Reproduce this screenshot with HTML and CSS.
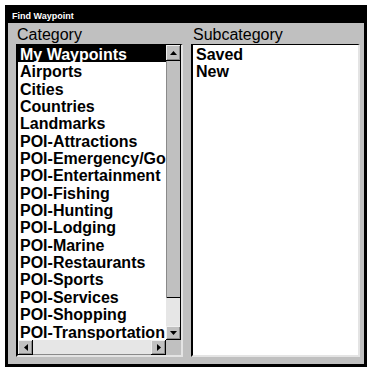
FILE: index.html
```html
<!DOCTYPE html>
<html lang="en">
<head>
    <meta charset="UTF-8">
    <title>Find Waypoint</title>
    <link rel="stylesheet" href="styles.css">
</head>
<body>
    <div class="window">
        <div class="titlebar">Find Waypoint</div>
        <div class="panes">
            <div class="column left-col">
                <div class="label">Category</div>
                <div class="listbox">
                    <ul class="items">
                        <li class="selected">My Waypoints</li>
                        <li>Airports</li>
                        <li>Cities</li>
                        <li>Countries</li>
                        <li>Landmarks</li>
                        <li>POI-Attractions</li>
                        <li>POI-Emergency/Go</li>
                        <li>POI-Entertainment</li>
                        <li>POI-Fishing</li>
                        <li>POI-Hunting</li>
                        <li>POI-Lodging</li>
                        <li>POI-Marine</li>
                        <li>POI-Restaurants</li>
                        <li>POI-Sports</li>
                        <li>POI-Services</li>
                        <li>POI-Shopping</li>
                        <li>POI-Transportation</li>
                    </ul>
                    <div class="vscroll">
                        <div class="sb-btn up">
                            <svg width="7" height="4" viewBox="0 0 7 4"><polygon points="3.5,0 7,4 0,4" fill="#000"/></svg>
                        </div>
                        <div class="thumb"></div>
                        <div class="track"></div>
                        <div class="sb-btn down">
                            <svg width="7" height="4" viewBox="0 0 7 4"><polygon points="0,0 7,0 3.5,4" fill="#000"/></svg>
                        </div>
                    </div>
                    <div class="hscroll">
                        <div class="sb-btn">
                            <svg width="4" height="7" viewBox="0 0 4 7"><polygon points="4,0 4,7 0,3.5" fill="#000"/></svg>
                        </div>
                        <div class="track"></div>
                        <div class="sb-btn">
                            <svg width="4" height="7" viewBox="0 0 4 7"><polygon points="0,0 4,3.5 0,7" fill="#000"/></svg>
                        </div>
                    </div>
                    <div class="corner"></div>
                </div>
            </div>
            <div class="column right-col">
                <div class="label">Subcategory</div>
                <div class="listbox plain">
                    <ul class="items">
                        <li>Saved</li>
                        <li>New</li>
                    </ul>
                </div>
            </div>
        </div>
    </div>
</body>
</html>
```

FILE: styles.css
```css
body {
    margin: 0;
    background-color: #fff;
    font-family: "Liberation Sans", Arial, sans-serif;
}

.window {
    margin: 5px 0 0 5px;
    width: 362px;
    height: 362px;
    box-sizing: border-box;
    border: 3px solid #000;
    background-color: #c0c0c0;
    display: flex;
    flex-direction: column;
}

.titlebar {
    height: 15px;
    box-sizing: border-box;
    padding: 1px 0 0 4px;
    background-color: #000;
    color: #fff;
    font-size: 9px;
    font-weight: bold;
    line-height: 14px;
}

.panes {
    flex: 1;
    display: flex;
    gap: 8px;
    padding: 0 4px 7px 8px;
}

.column {
    display: flex;
    flex-direction: column;
}

.left-col {
    width: 167px;
}

.right-col {
    flex: 1;
}

.label {
    font-size: 16px;
    line-height: 18px;
    padding: 3px 0 0 1px;
    color: #000;
}

.right-col .label {
    padding-left: 2px;
}

.listbox {
    flex: 1;
    min-height: 0;
    background-color: #fff;
    border-style: solid;
    border-width: 1px 2px 2px 2px;
    border-color: #000 #e4e4e4 #e4e4e4 #000;
    display: grid;
    grid-template-columns: 1fr 15px;
    grid-template-rows: 1fr 15px;
    overflow: hidden;
}

.listbox.plain {
    display: block;
    padding-left: 1px;
}

.items {
    list-style: none;
    margin: 0;
    padding: 0;
    overflow: hidden;
    min-width: 0;
}

.items li {
    height: 17.35px;
    line-height: 17.35px;
    padding-left: 2px;
    padding-top: 1px;
    box-sizing: border-box;
    font-size: 16px;
    font-weight: bold;
    white-space: nowrap;
    color: #000;
}

.items li.selected {
    background-color: #000;
    color: #fff;
}

.vscroll {
    display: flex;
    flex-direction: column;
}

.sb-btn {
    display: flex;
    align-items: center;
    justify-content: center;
    background-color: #c0c0c0;
    box-shadow: inset -1px -1px #000, inset 1px 1px #efefef, inset -2px -2px #8a8a8a;
}

.vscroll .sb-btn {
    height: 16px;
}

.vscroll .down {
    height: 14px;
}

.thumb {
    height: 237px;
    background-color: #c0c0c0;
    box-shadow: inset 1px 0 #8a8a8a, inset -1px 0 #000, inset 0 -1px #000;
}

.track {
    flex: 1;
    background-color: #e6e6e6;
}

.vscroll .track {
    box-shadow: inset -1px 0 #000;
}

.hscroll {
    display: flex;
}

.hscroll .sb-btn {
    width: 15px;
}

.hscroll .track {
    box-shadow: inset 0 -1px #8a8a8a;
}

.corner {
    background-color: #c0c0c0;
}
```
